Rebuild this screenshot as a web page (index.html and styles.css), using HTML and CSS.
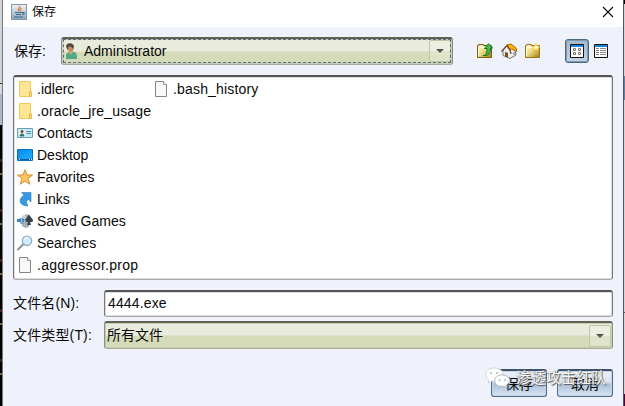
FILE: index.html
```html
<!DOCTYPE html>
<html lang="zh-CN">
<head>
<meta charset="utf-8">
<title>保存</title>
<link rel="stylesheet" href="styles.css">
</head>
<body>
<svg class="defs" width="0" height="0" aria-hidden="true">
  <defs>
    <linearGradient id="gold" x1="0" y1="0" x2="1" y2="1"><stop offset="0" stop-color="#fffbd5"/><stop offset=".45" stop-color="#eddc85"/><stop offset="1" stop-color="#a47a08"/></linearGradient>
    <linearGradient id="sky" x1="0" y1="0" x2="1" y2="1"><stop offset="0" stop-color="#0789ee"/><stop offset="1" stop-color="#22b1ff"/></linearGradient>
    <linearGradient id="steel" x1="0" y1="0" x2="0" y2="1"><stop offset="0" stop-color="#f0f4f7"/><stop offset="1" stop-color="#8ba3b9"/></linearGradient>
    <symbol id="folder" viewBox="0 0 16 16"><path d="M2.500.5h11v10l.5.500v4.500H2.500z" fill="#ffe596" stroke="#ecc85d"/><path d="M12.500 15.500V10.500l1-1 .8 1v5z" fill="#f9dc7b" stroke="#e3b84a"/></symbol>
    <symbol id="file" viewBox="0 0 16 16"><path d="M2.500.5h8l3 3v12h-11z" fill="#f8f8f8" stroke="#858585"/><path d="M10.500.5v3h3" fill="#fff" stroke="#999"/></symbol>
  </defs>
</svg>
<div class="screen">
  <div class="edge-left"><i class="line"></i><i class="bluebit"></i><i class="dark"></i></div>
  <main class="dialog">
    <header class="title">
      <svg width="16" height="16" viewBox="0 0 16 16"><rect x=".5" y=".5" width="15" height="15" fill="url(#steel)" stroke="#8299ac"/><path d="M8.500 2c2 1-3 3-.5 5M10.500 4.500c-2 1-2 1.500-1 3" fill="none" stroke="#e8793a" stroke-width="1.300"/><path d="M4 8.500h7M5 10.500h5M3 13h9M11 8.500h2c.8 1-.5 2-2 2" fill="none" stroke="#386989" stroke-width="1.200"/></svg>
      <span>保存</span>
      <svg class="close" width="12" height="12" viewBox="0 0 12 12"><path d="M1 1l10 10M11 1L1 11" stroke="#111" stroke-width="1.150"/></svg>
    </header>
    <section class="toolbar">
      <label>保存:</label>
      <div class="combo focused">
        <svg width="16" height="17" viewBox="0 0 16 17"><path d="M2 16v-3c0-3 2-4 4-4h4c2 0 3 2 3 6v1z" fill="#4fa982"/><path d="M5 7l4-1v3l-2 3-2-2z" fill="#d9a074"/><circle cx="6.500" cy="5" r="3.400" fill="#c28c65"/><path d="M2.500 5C1 .8 5-.4 8 .8c2.500 1 2 4 .8 5L7 3.500 4 4 3.800 7z" fill="#54483d"/></svg>
        <span>Administrator</span><b class="arrow"></b>
      </div>
      <div class="tools">
        <svg width="16" height="16" viewBox="0 0 16 16"><path d="M.5 14.500v-12h1v-1h5v1h8v12z" fill="url(#gold)" stroke="#776016"/><path d="M1.500 13V4.500h11" fill="none" stroke="#fffbe0"/><path d="M6 12.500c3 .4 4-1.500 4-7H7.500L11.500.7 15.500 5h-2c.2 5-2 8.500-7.500 7.500z" fill="#43bd4b" stroke="#117328"/></svg>
        <svg width="17" height="16" viewBox="0 0 17 16"><path d="M2 7l4-4 8 3 1 6-6 3.500-7-3z" fill="#eee" stroke="#74716d"/><path d="M6 2l4-1 5 4 .8 3.500-5-2.500-2 .5z" fill="#ffb300" stroke="#a96900"/><path d="M.5 8.500L6 2.500l3 4.500 1 4" fill="none" stroke="#76502d" stroke-width="1.400"/><path d="M4 9l3 .7v4.800l-3-1z" fill="#7d4f29"/><path d="M12 9h2v3h-2z" fill="#aaa"/></svg>
        <svg width="16" height="16" viewBox="0 0 16 16"><path d="M.5 14.500v-12h1v-1h5v1h8v12z" fill="url(#gold)" stroke="#95761e"/><path d="M1.500 13V4.500h11" fill="none" stroke="#fffbe0"/><path d="M11 .3l1.200 2.500 2.800.8-2 1.700.2 2.700-2.200-1.500L8.500 8l.5-2.700-2-1.700 2.800-.8z" fill="#ffe36b" stroke="#efb91d" stroke-width=".6"/><circle cx="11" cy="4.500" r="1.400" fill="#fff"/></svg>
      </div>
      <div class="view selected"><svg width="14" height="14" viewBox="0 0 14 14"><path d="M.5.5h13v13H.5z" fill="#fff" stroke="#111"/><path d="M1 1h12v2H1z" fill="#1686dc"/><g fill="#fff" stroke="#777"><path d="M3.500 4.500h2v2h-2zM8.500 4.500h2v2h-2zM3.500 8.500h2v2h-2zM8.500 8.500h2v2h-2z"/></g></svg></div>
      <div class="view"><svg width="14" height="14" viewBox="0 0 14 14"><path d="M.5.5h13v13H.5z" fill="#fff" stroke="#111"/><path d="M1 1h12v2H1z" fill="#1686dc"/><path d="M2 4.500h3M6 4.500h6M2 6.500h3M6 6.500h6M2 8.500h3M6 8.500h6M2 10.500h3M6 10.500h6" stroke="#888"/></svg></div>
    </section>
    <section class="files">
      <div class="item"><svg><use href="#folder"/></svg><span>.idlerc</span></div>
      <div class="item wide"><svg><use href="#folder"/></svg><span>.oracle_jre_usage</span></div>
      <div class="item"><svg viewBox="0 0 16 16"><path d="M.5 3.500h15v9H.5z" fill="#c6e8f7" stroke="#6d9fbd"/><path d="M2 5h6v7H2z" fill="#eef8ef"/><circle cx="5" cy="6.500" r="1.500" fill="#604b3b"/><path d="M2.500 11.500c0-4 5-4 5 0z" fill="#327864"/><path d="M9.500 6.500H14M9.500 8.500H14" stroke="#4f8cae"/></svg><span>Contacts</span></div>
      <div class="item"><svg viewBox="0 0 16 16"><path d="M.5 2.500h15v11H.5z" fill="url(#sky)" stroke="#086fbe"/><path d="M1 12.500h14" stroke="#075d9d"/><path d="M2 12.500h1M12 12.500h1M14 12.500h1" stroke="#bce9ff"/></svg><span>Desktop</span></div>
      <div class="item"><svg viewBox="0 0 16 16"><path d="M8 .7l2 5.300h5.500L11 9.500l1.700 5.700L8 12l-4.700 3.200L5 9.500.5 6H6z" fill="#ffc85d" stroke="#d98d35"/></svg><span>Favorites</span></div>
      <div class="item"><svg viewBox="0 0 16 16"><path d="M4.500 1.500h9.500v9.500l-2.500-2.500c-2.500 1-2.200 3.500-.5 6.500C3 15 0 9 7 4z" fill="#3599e4" stroke="#2a7fc9" stroke-width=".6"/></svg><span>Links</span></div>
      <div class="item"><svg viewBox="0 0 16 16"><path d="M5 13V4l4-3 3 1v12l-4 1z" fill="#a7b0b6"/><path d="M12 1.500l4 5.500c.3 2-1.500 2.800-3 1.800l1 3.200h-4l1-3c-2 .4-3-1-2.500-3z" fill="#34434c"/><path d="M0 6h2.500V4.500l3 2.500v3l-2 1.500V9H0zM7 5.500H4.500v4H7z" fill="#3988ba"/><circle cx="7.500" cy="4" r="2" fill="#c8d1d5"/></svg><span>Saved Games</span></div>
      <div class="item"><svg viewBox="0 0 16 16"><path d="M1 14.500L6.500 9" stroke="#879199" stroke-width="2" stroke-linecap="round"/><circle cx="10" cy="5.700" r="4.700" fill="#ccecff" stroke="#91a9b8" stroke-width="1.200"/><path d="M7 5c.8-2 3-2.500 4-2" fill="none" stroke="#fff"/></svg><span>Searches</span></div>
      <div class="item wider"><svg><use href="#file"/></svg><span>.aggressor.prop</span></div>
      <div class="item wide"><svg><use href="#file"/></svg><span>.bash_history</span></div>
    </section>
    <section class="form">
      <label>文件名(N):</label><div class="input">4444.exe</div>
      <label>文件类型(T):</label><div class="combo"><span>所有文件</span><b class="arrow"></b></div>
    </section>
    <footer class="actions"><div class="button">保存</div><div class="button">取消</div></footer>
    <div class="watermark">
      <svg width="26" height="22" viewBox="0 0 26 22"><path d="M9 1C3 1 0 5 1 9c.5 2 2 3 3 4l-1 3 4-2c7 1 11-1 11-6S14 1 9 1z" fill="#fff" stroke="#c6cad0" stroke-width=".8"/><path d="M17 8c-5 0-8 3-7 7 .7 4 5 5 9 4l3 2-.5-3c7-5 1-10-4.500-10z" fill="#fff" stroke="#a5acb4" stroke-width=".8"/><g fill="#b2b9c0"><circle cx="6" cy="6" r="1"/><circle cx="12" cy="6" r="1"/><circle cx="14.500" cy="13" r="1"/><circle cx="20" cy="13" r="1"/></g></svg>
      <span>渗透攻击红队</span>
    </div>
  </main>
  <div class="edge-right"><i class="cap"></i><i class="panel"></i><i class="blue"></i><i class="lower"></i><i class="wine"></i></div>
</div>
</body>
</html>
```
FILE: styles.css
```css
* { box-sizing: border-box; }
body { margin: 0; overflow: hidden; color: #080808; font: 14px/20px "Liberation Sans", "Noto Sans CJK SC", sans-serif; }
svg { display: block; flex: none; }
.defs { position: absolute; }
.screen { display: flex; width: 625px; height: 406px; }
.edge-left { display: flex; flex-direction: column; width: 3px; background: #d0d3d7; border-right: 1px solid #777; }
.edge-left .line { height: 84px; border-bottom: 1px solid #333; }
.edge-left .bluebit { height: 41px; border-top: 10px solid #d6d8dc; background: #a7b9cc; }
.edge-left .dark { flex: 1; background: repeating-linear-gradient(#000 0 34px, #432018 34px 37px, #000 37px 48px, #846638 48px 50px); }
.dialog { position: relative; width: 620px; height: 406px; background: #eff2fb; }
.title { display: flex; align-items: center; height: 27px; padding: 0 9px 4px 8px; background: #fff; font-size: 12px; }
.title span { margin-left: 5px; }
.title .close { margin-left: auto; }
.toolbar { display: flex; align-items: center; height: 48px; padding-left: 11px; }
.toolbar label { width: 47px; }
.combo { display: flex; align-items: center; height: 28px; padding: 0 1px 0 3px; border: 1px solid #8c9079; border-top: 2px solid #60634f; border-bottom-color: #a8ac94; border-radius: 3px; background: linear-gradient(#e9ecdc 0 48%, #d5dab9 52% 100%); box-shadow: inset 0 0 0 1px #c9cdb5; }
.focused { position: relative; width: 392px; padding: 0 1px 1px 2px; }
.focused::after { content: ""; position: absolute; inset: 0 1px 1px; border: 1px dashed #567083; }
.focused span { margin-left: 4px; }
.arrow { display: grid; place-items: center; width: 22px; height: 22px; margin-left: auto; border: 1px solid #c2c7ac; border-radius: 2px; background: linear-gradient(#eceee1 0 48%, #dfe3c9 52%); }
.arrow::after { content: ""; border: 4px solid transparent; border-top: 4px solid #555; border-bottom: 0; }
.tools { display: flex; gap: 8px; width: 88px; margin-left: 24px; }
.tools svg:nth-child(2) { margin-right: -1px; }
.view { display: grid; place-items: center; width: 24px; height: 24px; border-radius: 3px; }
.view.selected { border: 1px solid #486783; background: linear-gradient(#a5b7cc, #c5d3e3); box-shadow: inset 0 0 0 1px #7f9ab5; }
.files { display: grid; grid-template: repeat(9, 22px) / 136px 140px; grid-auto-flow: column; width: 600px; height: 205px; margin-left: 10px; padding: 1px 3px; border: 1px solid #777; border-top: 2px solid #555; border-bottom-color: #aaa; border-radius: 3px; background: #fff; box-shadow: inset 0 0 0 1px #ddd; }
.item { display: flex; align-items: center; white-space: nowrap; }
.item svg { width: 16px; height: 16px; margin-right: 4px; }
.wide { letter-spacing: .17px; }
.wider { letter-spacing: .27px; }
.form { display: grid; grid-template: 27px 28px / 91px 509px; row-gap: 4px; align-items: center; margin: 10px 0 0 10px; }
.form label { white-space: nowrap; letter-spacing: .15px; padding-bottom: 1px; }
.input { height: 27px; padding: 1px 3px; letter-spacing: .15px; border: 1px solid #777; border-top: 2px solid #555; border-bottom-color: #aaa; border-radius: 3px; background: #fff; box-shadow: inset 0 0 0 1px #ddd; }
.form .combo { padding-left: 2px; }
.form .combo span { padding-bottom: 1px; }
.actions { display: flex; justify-content: flex-end; gap: 10px; margin: 20px 10px 0 0; }
.button { display: grid; place-items: center; width: 56px; height: 28px; border: 1px solid #486c91; border-top: 2px solid #3e536b; border-radius: 3px; background: linear-gradient(#eef3f9, #d5e0ed 46%, #adc1d8 52%, #d8e5f3); box-shadow: inset 0 0 0 1px #c5d5e6; }
.watermark { position: absolute; left: 482px; top: 367px; display: flex; align-items: center; color: #f8f8f8; font-size: 15px; text-shadow: 1px 1px 1px #555, 0 0 1px #777; white-space: nowrap; }
.watermark span { margin-left: 5px; }
.edge-right { display: flex; flex-direction: column; width: 2px; background: #d4d4d6; border-left: 1px solid #555; }
.edge-right .cap { height: 4px; background: #000; }
.edge-right .panel { height: 72px; }
.edge-right .blue { height: 24px; background: #627fa4; }
.edge-right .lower { height: 294px; background: linear-gradient(#d4d4d6 0 212px, #555 212px 213px, #d4d4d6 213px); }
.edge-right .wine { height: 12px; background: #540038; }
```
